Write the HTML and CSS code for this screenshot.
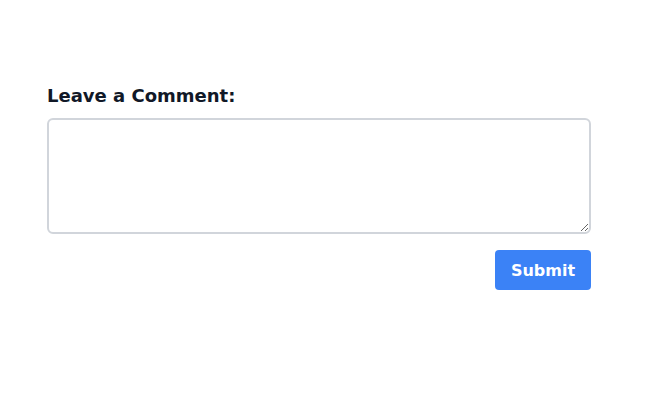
FILE: index.html
```html
<!DOCTYPE html>
<html>
<head>
	<meta charset="utf-8">
	<title>Comment</title>
	<link rel="stylesheet" href="styles.css">
</head>
<body>
	<div class="c">
		<form class="comment">
			<label for="comment" class="lbl">Leave a Comment:</label>
			<textarea id="comment" class="txt"></textarea>
			<div class="actions">
				<button type="submit" class="btn">Submit</button>
			</div>
		</form>
	</div>
</body>
</html>
```

FILE: styles.css
```css
	* {
		box-sizing: border-box;
	}
	body {
		margin: 0;
		font-family: "DejaVu Sans", sans-serif;
		background-color: #fff;
		color: #111827;
	}
	.c {
		padding: 82px 59px 0 47px;
	}
	.comment {
		display: flex;
		flex-direction: column;
	}
	.lbl {
		display: block;
		font-size: 18px;
		font-weight: bold;
		line-height: 28px;
		margin-bottom: 8px;
	}
	.txt {
		display: block;
		width: 100%;
		height: 116px;
		border: 2px solid #d1d5db;
		border-radius: 6px;
		padding: 8px;
		font-family: inherit;
		font-size: 16px;
		resize: vertical;
		outline: none;
	}
	.actions {
		display: flex;
		justify-content: flex-end;
		margin-top: 16px;
	}
	.btn {
		width: 96px;
		height: 40px;
		border: none;
		border-radius: 4px;
		background-color: #3b82f6;
		color: #fff;
		font-family: inherit;
		font-size: 16px;
		font-weight: bold;
		cursor: pointer;
	}
```
